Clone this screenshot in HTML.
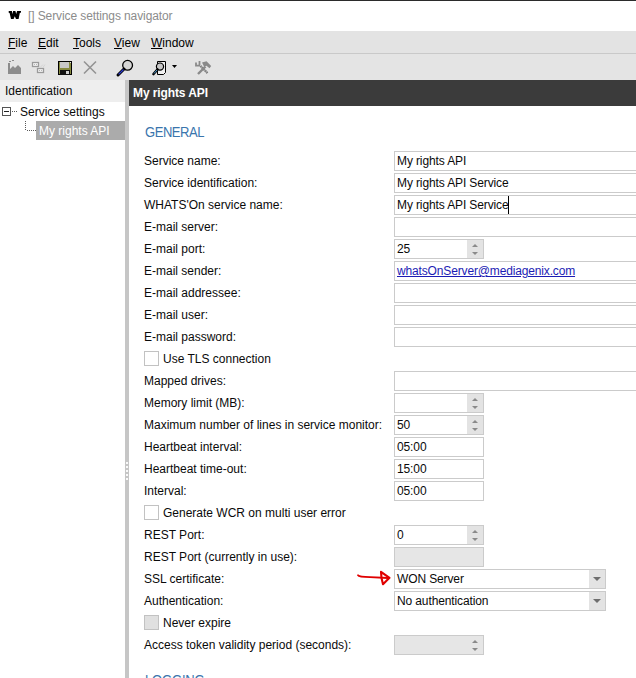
<!DOCTYPE html>
<html><head><meta charset="utf-8">
<style>
*{margin:0;padding:0;box-sizing:border-box}
html,body{width:636px;height:678px;overflow:hidden;background:#fff;font-family:"Liberation Sans",sans-serif;font-size:12px;color:#0a0a0a}
.a{position:absolute}
#topline{left:0;top:0;width:636px;height:1px;background:#2b2b2b}
#title{left:0;top:1px;width:636px;height:30px;background:#fff}
#menubar{left:0;top:31px;width:636px;height:22px;background:#e3e3e3}
#menusep{left:0;top:53px;width:636px;height:1px;background:#c9c9c9}
#toolbar{left:0;top:54px;width:636px;height:26px;background:#e4e4e4}
.menu{top:36px;line-height:15px;color:#000}
.menu u{text-decoration:underline;text-underline-offset:1px}
#lhead{left:0;top:80px;width:125px;height:22px;background:#eeeeee}
#ltree{left:0;top:102px;width:125px;height:576px;background:#fff}
#split{left:125px;top:80px;width:4px;height:598px;background:#c6c6c6}
#rhead{left:129px;top:80px;width:507px;height:26px;background:#3b3b3b;color:#fff;font-weight:bold}
#content{left:129px;top:106px;width:507px;height:572px;background:#fff}
.lbl{left:144px;line-height:14px;white-space:nowrap}
.box{left:394px;height:20px;border:1px solid #cbcbcb;background:#fff;line-height:18px;padding-left:2px;letter-spacing:-0.12px;white-space:nowrap;overflow:hidden}
.full{width:250px}
.short{width:90px}
.spin{position:absolute;right:0;top:0;width:16px;height:18px;background:#e3e3e3}
.up,.dn{position:absolute;left:5px;width:0;height:0;border-left:3px solid transparent;border-right:3px solid transparent}
.up{top:4px;border-bottom:3px solid #8a8a8a}
.dn{top:12px;border-top:3px solid #8a8a8a}
.dis{background:#e6e6e6}
.dd{position:absolute;right:0;top:0;width:16px;height:18px;background:#e3e3e3}
.dd i{position:absolute;left:4px;top:7px;width:0;height:0;border-left:4px solid transparent;border-right:4px solid transparent;border-top:4px solid #6e6e6e}
.combo{width:212px}
.link{color:#1c1cb4;text-decoration:underline;letter-spacing:-0.15px}
.cur{display:inline-block;width:1px;height:14px;background:#000;vertical-align:-3px}
.sdis{background:#e6e6e6}
.cb{left:144px;width:15px;height:15px;border:1px solid #c2c2c2;background:#fff}
.cbdis{background:#e0e0e0}
</style></head><body>
<div class="a" id="topline"></div>
<div class="a" id="title"></div>
<div class="a" style="left:28px;top:8px;font-size:12px;letter-spacing:-0.1px;line-height:16px;color:#8c8c8c;white-space:nowrap">[] Service settings navigator</div>
<div class="a" id="menubar"></div>
<div class="a" id="menusep"></div>
<div class="a menu" style="left:8px"><u>F</u>ile</div>
<div class="a menu" style="left:38px"><u>E</u>dit</div>
<div class="a menu" style="left:73px"><u>T</u>ools</div>
<div class="a menu" style="left:114px"><u>V</u>iew</div>
<div class="a menu" style="left:151px"><u>W</u>indow</div>
<div class="a" id="toolbar"></div>
<div class="a" id="lhead"></div>
<div class="a" style="left:5px;top:84px;line-height:14px">Identification</div>
<div class="a" id="ltree"></div>
<div class="a" style="left:20px;top:105px;line-height:14px">Service settings</div>
<div class="a" style="left:36px;top:121px;width:89px;height:19px;background:#ababab"></div>
<div class="a" style="left:39px;top:124px;line-height:14px;color:#fff">My rights API</div>
<div class="a" id="split"></div>
<div class="a" id="rhead"></div>
<div class="a" style="left:133px;top:86px;line-height:14px;color:#fff;font-weight:bold;letter-spacing:-0.1px">My rights API</div>
<div class="a" id="content"></div>
<div class="a" style="left:144.5px;top:123.5px;line-height:16px;color:#3a75ad;font-size:14px;letter-spacing:-0.5px;transform:scaleX(0.93);transform-origin:0 0">GENERAL</div>
<div id="form">
<div class="a lbl" style="top:154px">Service name:</div>
<div class="a box full" style="top:151px">My rights API</div>
<div class="a lbl" style="top:176px">Service identification:</div>
<div class="a box full" style="top:173px">My rights API Service</div>
<div class="a lbl" style="top:198px">WHATS&#39;On service name:</div>
<div class="a box full" style="top:195px">My rights API Service</div>
<div class="a" style="left:508px;top:196px;width:1px;height:18px;background:#000"></div>
<div class="a lbl" style="top:220px">E-mail server:</div>
<div class="a box full" style="top:217px"></div>
<div class="a lbl" style="top:242px">E-mail port:</div>
<div class="a box short" style="top:239px">25<div class="spin"><i class="up"></i><i class="dn"></i></div></div>
<div class="a lbl" style="top:264px">E-mail sender:</div>
<div class="a box full" style="top:261px"><span class="link">whatsOnServer@mediagenix.com</span></div>
<div class="a lbl" style="top:286px">E-mail addressee:</div>
<div class="a box full" style="top:283px"></div>
<div class="a lbl" style="top:308px">E-mail user:</div>
<div class="a box full" style="top:305px"></div>
<div class="a lbl" style="top:330px">E-mail password:</div>
<div class="a box full" style="top:327px"></div>
<div class="a cb" style="top:351px"></div>
<div class="a lbl" style="left:163px;top:352px">Use TLS connection</div>
<div class="a lbl" style="top:374px">Mapped drives:</div>
<div class="a box full" style="top:371px"></div>
<div class="a lbl" style="top:396px">Memory limit (MB):</div>
<div class="a box short" style="top:393px"><div class="spin"><i class="up"></i><i class="dn"></i></div></div>
<div class="a lbl" style="top:418px">Maximum number of lines in service monitor:</div>
<div class="a box short" style="top:415px">50<div class="spin"><i class="up"></i><i class="dn"></i></div></div>
<div class="a lbl" style="top:440px">Heartbeat interval:</div>
<div class="a box short" style="top:437px">05:00</div>
<div class="a lbl" style="top:462px">Heartbeat time-out:</div>
<div class="a box short" style="top:459px">15:00</div>
<div class="a lbl" style="top:484px">Interval:</div>
<div class="a box short" style="top:481px">05:00</div>
<div class="a cb" style="top:505px"></div>
<div class="a lbl" style="left:163px;top:506px">Generate WCR on multi user error</div>
<div class="a lbl" style="top:528px">REST Port:</div>
<div class="a box short" style="top:525px">0<div class="spin"><i class="up"></i><i class="dn"></i></div></div>
<div class="a lbl" style="top:550px">REST Port (currently in use):</div>
<div class="a box short dis" style="top:547px"></div>
<div class="a lbl" style="top:572px">SSL certificate:</div>
<div class="a box combo" style="top:569px">WON Server<div class="dd"><i></i></div></div>
<div class="a lbl" style="top:594px">Authentication:</div>
<div class="a box combo" style="top:591px">No authentication<div class="dd"><i></i></div></div>
<div class="a cb cbdis" style="top:615px"></div>
<div class="a lbl" style="left:163px;top:616px">Never expire</div>
<div class="a lbl" style="top:638px">Access token validity period (seconds):</div>
<div class="a box short dis" style="top:635px"><div class="spin sdis"><i class="up"></i><i class="dn"></i></div></div>
</div>

<svg class="a" style="left:0;top:0" width="636" height="678" viewBox="0 0 636 678">
<!-- W logo -->
<path d="M8.7,11 L11.9,11 L12.5,14.2 L13.1,11 L15.4,11 L16.2,14 L17.1,11 L21,11 L21,12.6 L19.8,13 L18.6,19 L16,19 L14.8,16.3 L13.6,19 L11,19 L9.6,13 L8.7,12.8 Z" fill="#000"/>
<!-- toolbar: factory -->
<g fill="#8c8c8c">
<path d="M8,63 h2 v6 l3,-3 l2,2 l3,-3 l3,3 v6 h-13 z"/>
<rect x="9" y="61" width="2" height="1"/><rect x="12" y="60" width="2" height="1"/>
</g>
<!-- two rects -->
<g fill="#f4f4f4" stroke="#9a9a9a" stroke-width="1.3">
<rect x="32.5" y="62.5" width="6" height="4"/>
<rect x="37.5" y="68.5" width="6" height="4"/>
</g>
<g fill="#b8b8b8"><rect x="34" y="64" width="1" height="1"/><rect x="36" y="64" width="1" height="1"/><rect x="39" y="70" width="1" height="1"/><rect x="41" y="70" width="1" height="1"/></g>
<path d="M40,67.5 l3,-3 M43,67.5 l2,-3" stroke="#d4d4d4" stroke-width="1"/>
<!-- save -->
<rect x="58" y="61" width="14" height="14" fill="#000"/>
<rect x="59" y="62" width="12" height="12" fill="#868a40"/>
<rect x="60" y="62" width="9" height="6" fill="#c8c8c8"/>
<rect x="60" y="70" width="10" height="5" fill="#101010"/>
<rect x="66" y="71" width="3" height="3" fill="#d0d0d0"/>
<rect x="70" y="62" width="1" height="1" fill="#e0e0e0"/>
<!-- X -->
<path d="M84,61.5 L96,73.5 M96,61.5 L84,73.5" stroke="#949494" stroke-width="1.6"/>
<!-- magnifier -->
<circle cx="127.6" cy="65.3" r="4.9" fill="#d6d6d6" stroke="#000" stroke-width="1.3"/>
<path d="M118,75 L124,69" stroke="#000" stroke-width="3" stroke-linecap="round"/>
<path d="M118.6,74.4 L123.5,69.5" stroke="#2a3ad0" stroke-width="1.3"/>
<!-- doc magnifier -->
<path d="M157.5,61.5 h8 v11 l-2,2 h-6 z" fill="#f0f0f0" stroke="#000" stroke-width="1"/>
<circle cx="160" cy="66.6" r="3.6" fill="#c8c8c8" stroke="#000" stroke-width="1.2"/>
<path d="M153.5,74 L157.5,69.5" stroke="#000" stroke-width="2.6" stroke-linecap="round"/>
<path d="M154,73.5 L157,70" stroke="#4a9ad0" stroke-width="1"/>
<path d="M172,65 h5 l-2.5,3 z" fill="#000"/>
<!-- tools -->
<g stroke="#8a8a8a" fill="none">
<path d="M200.5,66 L207.5,73" stroke="#a8a8a8" stroke-width="2.2"/>
<path d="M200.5,66 L207.5,73" stroke="#7a7a7a" stroke-width="2.2" stroke-dasharray="1 1.2"/>
<path d="M205.5,66.5 L198,74" stroke-width="2.4"/>
<path d="M196,62.5 v3.2 h4 M199.5,61 v4.5" stroke-width="1.8"/>
</g>
<path d="M202,62.5 L206.5,61.3 L211.2,66 L209.5,68.2 L206.5,65.8 L204,66.5 Z" fill="#8a8a8a"/>
<!-- tree -->
<rect x="2.5" y="107.5" width="8" height="8" fill="#fff" stroke="#555" stroke-width="1"/>
<rect x="4" y="111" width="5" height="1" fill="#222"/>
<g fill="#5a5a5a"><rect x="12" y="111" width="1" height="1"/><rect x="14" y="111" width="1" height="1"/><rect x="16" y="111" width="1" height="1"/>
<rect x="25" y="121" width="1" height="1"/><rect x="25" y="123" width="1" height="1"/><rect x="25" y="125" width="1" height="1"/><rect x="25" y="127" width="1" height="1"/><rect x="25" y="129" width="1" height="1"/>
<rect x="27" y="130" width="1" height="1"/><rect x="29" y="130" width="1" height="1"/><rect x="31" y="130" width="1" height="1"/><rect x="33" y="130" width="1" height="1"/><rect x="35" y="130" width="1" height="1"/></g>
<!-- grip -->
<g fill="#fafafa"><rect x="126" y="462" width="2" height="2"/><rect x="126" y="466" width="2" height="2"/><rect x="126" y="470" width="2" height="2"/><rect x="126" y="474" width="2" height="2"/><rect x="126" y="478" width="2" height="2"/></g>
<!-- red arrow -->
<path d="M358,575.3 Q359,577 370,577.2 L388,578" fill="none" stroke="#e00000" stroke-width="1.8" stroke-linecap="round"/>
<path d="M381,571.8 L389.5,577.8 L383,584.2 L381.5,578 Z" fill="none" stroke="#e00000" stroke-width="2.1" stroke-linejoin="round"/>
</svg>
<div class="a" style="left:144.5px;top:671.5px;line-height:16px;color:#3a75ad;font-size:14px;letter-spacing:-0.2px;transform:scaleX(0.93);transform-origin:0 0">LOGGING</div>
</body></html>
